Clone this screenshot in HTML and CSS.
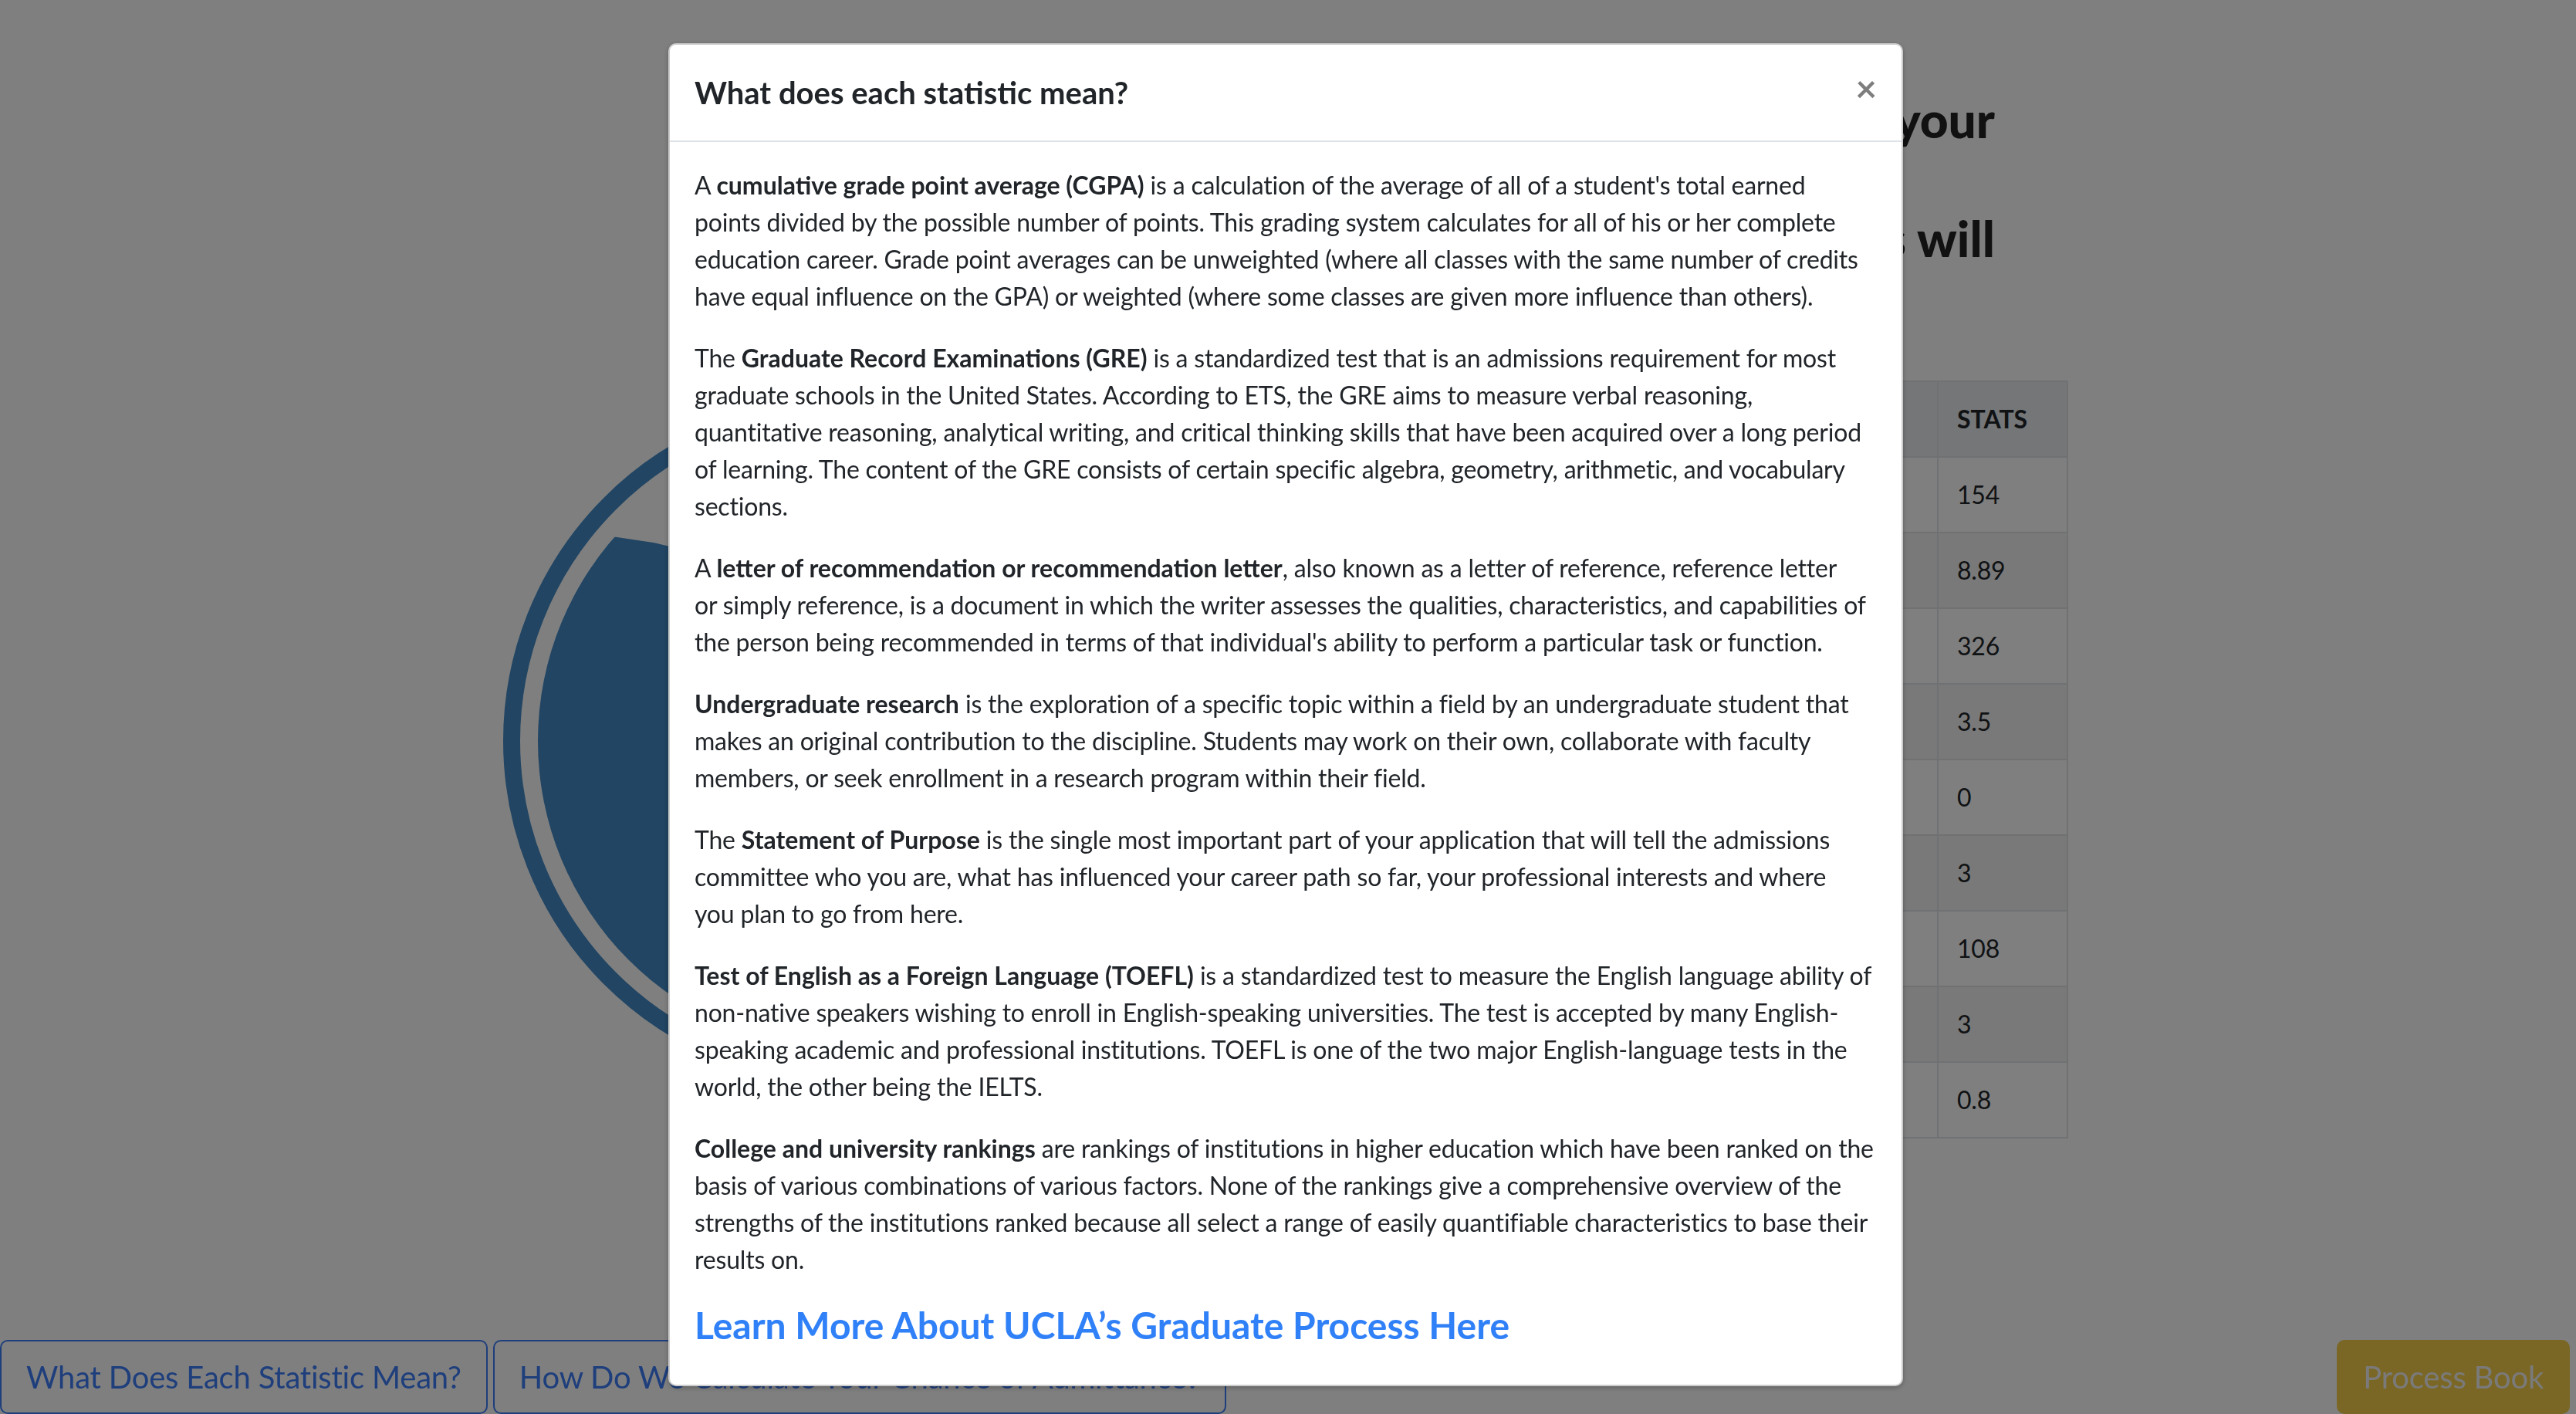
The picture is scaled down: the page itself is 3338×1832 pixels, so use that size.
FILE: index.html
```html
<!DOCTYPE html>
<html lang="en">
<head>
<meta charset="utf-8">
<title>Graduate Admission Predictor</title>
<link rel="stylesheet" href="styles.css">
</head>
<body>
<main class="page">
  <section class="col-chart">
    <svg class="gauge" width="1000" height="1000" viewBox="0 0 1000 1000">
      <defs>
        <clipPath id="inner"><circle cx="500" cy="500" r="401"/></clipPath>
      </defs>
      <circle cx="500" cy="500" r="435" fill="none" stroke="#428ac6" stroke-width="22"/>
      <g clip-path="url(#inner)">
        <polygon fill="#428ac6" points="0,262.2 50,248.5 100,238.6 150,234.2 200,235.8 250,243.2 300,255.3 350,270.2 400,285.8 450,299.5 500,309.4 550,313.8 600,312.2 650,304.8 700,292.7 750,277.8 800,262.2 850,248.5 900,238.6 950,234.2 1000,235.8 1000,1000 0,1000"/>
      </g>
      <text x="500" y="560" text-anchor="middle" class="gauge-text">80%</text>
    </svg>
  </section>
  <section class="col-info">
    <h2 class="headline">
      <span class="line">Enter and compare your</span>
      <span class="line line-short">statistics. The</span>
      <span class="line">predictions will</span>
    </h2>
    <table class="stats">
      <thead>
        <tr><th class="label">Statistic</th><th class="value">STATS</th></tr>
      </thead>
      <tbody>
        <tr><td class="label">GRE Verbal</td><td class="value">154</td></tr>
        <tr><td class="label">CGPA</td><td class="value">8.89</td></tr>
        <tr><td class="label">GRE Score</td><td class="value">326</td></tr>
        <tr><td class="label">Letter of Recommendation</td><td class="value">3.5</td></tr>
        <tr><td class="label">Research</td><td class="value">0</td></tr>
        <tr><td class="label">Statement of Purpose</td><td class="value">3</td></tr>
        <tr><td class="label">TOEFL Score</td><td class="value">108</td></tr>
        <tr><td class="label">University Rating</td><td class="value">3</td></tr>
        <tr><td class="label">Chance of Admit</td><td class="value">0.8</td></tr>
      </tbody>
    </table>
  </section>
</main>

<div class="action-bar">
  <div class="action-group">
    <button class="btn btn-outline">What Does Each Statistic Mean?</button>
    <button class="btn btn-outline">How Do We Calculate Your Chance of Admittance?</button>
  </div>
  <button class="btn btn-warning">Process Book</button>
</div>

<div class="backdrop"></div>

<div class="modal">
  <div class="modal-dialog">
    <div class="modal-content">
      <div class="modal-header">
        <h5 class="modal-title">What does each statistic mean?</h5>
        <button class="close" type="button">×</button>
      </div>
      <div class="modal-body">
        <p>A <b>cumulative grade point average (CGPA)</b> is a calculation of the average of all of a student's total earned points divided by the possible number of points. This grading system calculates for all of his or her complete education career. Grade point averages can be unweighted (where all classes with the same number of credits have equal influence on the GPA) or weighted (where some classes are given more influence than others).</p>
        <p>The <b>Graduate Record Examinations (GRE)</b> is a standardized test that is an admissions requirement for most graduate schools in the United States. According to ETS, the GRE aims to measure verbal reasoning, quantitative reasoning, analytical writing, and critical thinking skills that have been acquired over a long period of learning. The content of the GRE consists of certain specific algebra, geometry, arithmetic, and vocabulary sections.</p>
        <p>A <b>letter of recommendation or recommendation letter</b>, also known as a letter of reference, reference letter<br>or simply reference, is a document in which the writer assesses the qualities, characteristics, and capabilities of the person being recommended in terms of that individual's ability to perform a particular task or function.</p>
        <p><b>Undergraduate research</b> is the exploration of a specific topic within a field by an undergraduate student that makes an original contribution to the discipline. Students may work on their own, collaborate with faculty members, or seek enrollment in a research program within their field.</p>
        <p>The <b>Statement of Purpose</b> is the single most important part of your application that will tell the admissions committee who you are, what has influenced your career path so far, your professional interests and where<br>you plan to go from here.</p>
        <p><b>Test of English as a Foreign Language (TOEFL)</b> is a standardized test to measure the English language ability of non-native speakers wishing to enroll in English-speaking universities. The test is accepted by many English-speaking academic and professional institutions. TOEFL is one of the two major English-language tests in the world, the other being the IELTS.</p>
        <p><b>College and university rankings</b> are rankings of institutions in higher education which have been ranked on the basis of various combinations of various factors. None of the rankings give a comprehensive overview of the strengths of the institutions ranked because all select a range of easily quantifiable characteristics to base their results on.</p>
        <h4 class="learn-more"><a href="#">Learn More About UCLA’s Graduate Process Here</a></h4>
      </div>
    </div>
  </div>
</div>
</body>
</html>
```

FILE: styles.css
```css
* { box-sizing: border-box; }

html, body {
  margin: 0;
  padding: 0;
  height: 100%;
  overflow: hidden;
}

body {
  font-family: Lato, "Open Sans", "Liberation Sans", sans-serif;
  color: #212529;
  background: #ffffff;
  font-size: 32px;
  line-height: 1.5;
  letter-spacing: -0.2px;
}

b { font-weight: 700; letter-spacing: 0; }

/* ---------- page behind the modal ---------- */
.page {
  display: flex;
  align-items: flex-start;
}

.col-chart {
  flex: 0 0 auto;
  padding: 460px 82px 0 598px;
}

.gauge { display: block; }

.gauge-text {
  font-family: Lato, sans-serif;
  font-size: 180px;
  font-weight: 700;
  fill: #ffffff;
}

.col-info {
  flex: 0 0 1000px;
  min-width: 0;
  padding-top: 117px;
}

.headline {
  margin: 0 0 146px;
  padding-right: 95px;
  font-size: 64px;
  font-weight: 900;
  line-height: 1.2;
  letter-spacing: 0;
  color: #222222;
  text-align: right;
}

.headline .line {
  display: block;
  white-space: nowrap;
}

.headline .line-short { padding-right: 220px; }

.stats {
  width: 100%;
  border-collapse: collapse;
  font-size: 32px;
  line-height: 1.5;
}

.stats th,
.stats td {
  border: 2px solid #dee2e6;
  padding: 24px;
  text-align: left;
  vertical-align: top;
}

.stats thead th {
  background: #e9ecef;
  font-weight: 700;
  letter-spacing: 0;
}

.stats .value { width: 168px; }

.stats tbody tr:nth-child(even) { background: #f2f2f2; }

/* ---------- bottom action bar ---------- */
.action-bar {
  position: fixed;
  left: 0;
  right: 0;
  bottom: 0;
  display: flex;
  justify-content: space-between;
  align-items: flex-end;
  padding-right: 8px;
}

.action-group {
  display: flex;
  gap: 7px;
}

.btn {
  font-family: Lato, "Open Sans", sans-serif;
  font-size: 40px;
  line-height: 1.5;
  letter-spacing: -0.2px;
  padding: 16px 32px;
  border-radius: 10px;
  border: 2px solid transparent;
  cursor: pointer;
}

.btn-outline {
  background: transparent;
  color: #3c7cf8;
  border-color: #3c7cf8;
}

.btn-warning {
  background: #f6ce4a;
  border-color: #f6ce4a;
  color: #f4f4f4;
}

/* ---------- modal ---------- */
.backdrop {
  position: fixed;
  inset: 0;
  background: #000000;
  opacity: 0.5;
}

.modal {
  position: fixed;
  inset: 0;
  padding-right: 6px;
  overflow: hidden;
}

.modal-dialog {
  width: 1600px;
  margin: 56px auto;
}

.modal-content {
  background: #ffffff;
  border: 2px solid rgba(0, 0, 0, 0.2);
  border-radius: 10px;
  box-shadow: 0 2px 6px rgba(0, 0, 0, 0.25);
}

.modal-header {
  display: flex;
  align-items: flex-start;
  justify-content: space-between;
  padding: 32px;
  border-bottom: 2px solid #dee2e6;
}

.modal-title {
  margin: 0;
  font-size: 40px;
  font-weight: 700;
  line-height: 1.5;
  letter-spacing: 0;
  color: #212529;
}

.close {
  margin: -32px -32px -32px auto;
  padding: 32px;
  background: transparent;
  border: 0;
  font-family: Lato, sans-serif;
  font-size: 48px;
  font-weight: 700;
  line-height: 1;
  color: #000000;
  opacity: 0.5;
}

.modal-body {
  padding: 32px;
}

.modal-body p {
  margin: 0 0 32px;
}

.learn-more {
  margin: 0 0 16px;
  font-size: 48px;
  font-weight: 700;
  line-height: 1.2;
  letter-spacing: 0;
}

.learn-more a {
  color: #3080f8;
  text-decoration: none;
}
```
